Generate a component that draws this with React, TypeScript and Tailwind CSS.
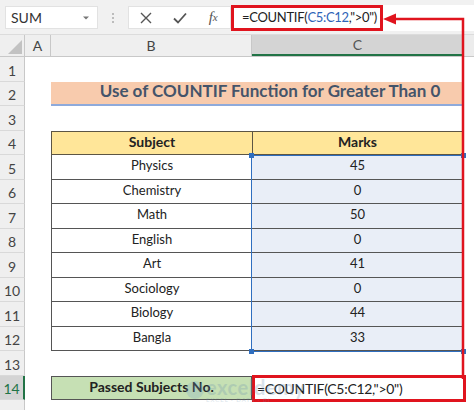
import React from "react";

const rows = [
  { s: "Physics", m: "45" },
  { s: "Chemistry", m: "0" },
  { s: "Math", m: "50" },
  { s: "English", m: "0" },
  { s: "Art", m: "41" },
  { s: "Sociology", m: "0" },
  { s: "Biology", m: "44" },
  { s: "Bangla", m: "33" },
];

function RowHead({ n, active }: { n?: number; active?: boolean }) {
  return (
    <div
      className={
        "w-[25px] shrink-0 h-full flex items-end justify-center text-[14px] leading-[20px] border-b border-[#d9d9d9] " +
        (active
          ? "bg-[#d4d4d4] text-[#217346] border-r-2 border-r-[#217346]"
          : "bg-[#efefef] text-[#444] border-r border-r-[#c8c8c8]")
      }
    >
      {n}
    </div>
  );
}

function Row({ n, active, children }: { n?: number; active?: boolean; children?: React.ReactNode }) {
  return (
    <div className="flex h-[24.5px] shrink-0">
      <RowHead n={n} active={active} />
      <div className="w-[26px] shrink-0" />
      {children}
    </div>
  );
}

export default function App() {
  return (
    <div
      className="relative w-[474px] h-[410px] overflow-hidden bg-white text-[#222]"
      style={{ fontFamily: "Lato, 'Open Sans', sans-serif" }}
    >
      {/* Top bar */}
      <div className="h-[35px] bg-[#f1f1f1] flex items-start pt-[6px] border-b border-[#dcdcdc]">
        <div className="ml-[5px] w-[93px] h-[23px] bg-white border border-[#e2e2e2] flex items-center px-[5px] text-[14px] text-[#333]">
          <span className="flex-1">SUM</span>
          <svg width="8" height="6" viewBox="0 0 8 6" className="mr-[2px]">
            <path d="M1 1.5 L4 4.5 L7 1.5 Z" fill="#777" />
          </svg>
        </div>
        <div className="w-[30px] h-[23px] flex flex-col items-center justify-center gap-[2px]">
          <span className="w-[2px] h-[2px] bg-[#aaa] rounded-full" />
          <span className="w-[2px] h-[2px] bg-[#aaa] rounded-full" />
          <span className="w-[2px] h-[2px] bg-[#aaa] rounded-full" />
        </div>
        <div className="w-[103px] h-[23px] bg-white border border-[#e2e2e2] flex items-center">
          <div className="w-[34px] flex justify-center">
            <svg width="14" height="14" viewBox="0 0 14 14">
              <path d="M2 2 L12 12 M12 2 L2 12" stroke="#555" strokeWidth="1.4" />
            </svg>
          </div>
          <div className="w-[34px] flex justify-center">
            <svg width="16" height="14" viewBox="0 0 16 14">
              <path d="M2 7.5 L6 11.5 L14 2.5" stroke="#555" strokeWidth="1.8" fill="none" />
            </svg>
          </div>
          <div
            className="w-[34px] flex justify-center text-[15px] italic text-[#555]"
            style={{ fontFamily: "'Liberation Serif', serif" }}
          >
            f<span className="text-[11px] mt-[3px]">x</span>
          </div>
        </div>
        <div className="flex-1 h-[26px] -mt-[1px] bg-white flex">
          <div className="h-full w-[152px] border-[3px] border-[#e0141e] flex items-center pl-[8px] text-[13px] text-[#222] tracking-[-0.3px] whitespace-nowrap">
            =COUNTIF(<span className="text-[#2e64b8]">C5:C12</span>,"&gt;0")
          </div>
        </div>
      </div>

      {/* Column headers */}
      <div className="h-[22px] flex bg-[#efefef] border-b border-[#c8c8c8]">
        <div className="w-[25px] shrink-0 flex items-end justify-end pr-[2px] pb-[2px] border-r border-[#c8c8c8]">
          <svg width="14" height="14" viewBox="0 0 14 14">
            <path d="M14 0 L14 14 L0 14 Z" fill="#c2c2c2" />
          </svg>
        </div>
        <div className="w-[26px] shrink-0 flex items-center justify-center text-[14px] text-[#444] border-r border-[#c8c8c8]">
          A
        </div>
        <div className="w-[201px] shrink-0 flex items-center justify-center text-[14px] text-[#444] border-r border-[#c8c8c8]">
          B
        </div>
        <div className="w-[211px] shrink-0 flex items-center justify-center text-[14px] text-[#555] bg-[#d4d4d4] border-b-2 border-[#217346]">
          C
        </div>
        <div className="flex-1 bg-[#ececec]" />
      </div>

      {/* Sheet rows */}
      <div className="flex flex-col">
        <Row n={1} />
        <Row n={2}>
          <div className="w-[412px] shrink-0 bg-[#f8cbad] border-b-2 border-[#8eaadb] flex items-end pb-[1px] justify-center pl-[26px] font-bold text-[17px] text-[#44546a]">
            Use of COUNTIF Function for Greater Than 0
          </div>
        </Row>
        <Row n={3} />
        <Row n={4}>
          <div className="w-[201px] shrink-0 bg-[#ffe699] border border-r-0 border-[#5c5544] flex items-end pb-[2px] justify-center font-bold text-[14px]">
            Subject
          </div>
          <div className="w-[211px] shrink-0 bg-[#ffe699] border border-[#5c5544] flex items-end pb-[2px] justify-center font-bold text-[14px]">
            Marks
          </div>
        </Row>
        {rows.map((r, i) => (
          <Row n={5 + i} key={r.s}>
            <div className="w-[201px] shrink-0 bg-white border-l border-b border-[#555] flex items-end pb-[3px] justify-center text-[13px]">
              {r.s}
            </div>
            <div className="w-[211px] shrink-0 bg-[#e9eef7] border-b border-[#555] flex items-end pb-[3px] justify-center text-[13px]">
              {r.m}
            </div>
          </Row>
        ))}
        <Row n={13} />
        <Row n={14} active>
          <div className="w-[201px] shrink-0 bg-[#c6e0b4] border border-[#555] flex items-end pb-[2px] justify-center font-bold text-[14px]">
            Passed Subjects No.
          </div>
          <div className="w-[214px] shrink-0 bg-white border-[3px] border-[#e0141e] -mt-[1px] h-[27px] flex items-center pl-[2px] text-[14px] text-[#222] tracking-[-0.3px] whitespace-nowrap">
            =COUNTIF(C5:C12,"&gt;0")
          </div>
        </Row>
        <Row />
      </div>

      {/* selection border C5:C12 */}
      <div className="absolute left-[251px] top-[155px] w-[213px] h-[197px] border border-[#2f6ebf] pointer-events-none">
        <span className="absolute -left-[3px] -top-[3px] w-[5px] h-[5px] bg-[#2f6ebf]" />
        <span className="absolute -right-[3px] -top-[3px] w-[5px] h-[5px] bg-[#2f6ebf]" />
        <span className="absolute -left-[3px] -bottom-[3px] w-[5px] h-[5px] bg-[#2f6ebf]" />
        <span className="absolute -right-[3px] -bottom-[3px] w-[5px] h-[5px] bg-[#2f6ebf]" />
      </div>

      {/* watermark */}
      <div className="absolute left-[186px] top-[377px] flex items-center opacity-25 pointer-events-none">
        <span className="w-[18px] h-[18px] rounded-full bg-[#7fa7c9] mr-[2px]" />
        <span className="flex flex-col leading-none">
          <span className="text-[20px] font-bold text-[#6b8fae] tracking-[0.5px]">exceldemy</span>
          <span className="text-[6px] text-[#6b8fae] tracking-[1px]">EXCEL · DATA · BI</span>
        </span>
      </div>

      {/* red annotation line with arrow */}
      <svg className="absolute left-0 top-0 pointer-events-none" width="474" height="410">
        <path d="M394 19 L463 19 L463 379" stroke="#e0141e" strokeWidth="2.5" fill="none" />
        <path d="M383 19 L396 13.5 L396 24.5 Z" fill="#e0141e" />
      </svg>
    </div>
  );
}
